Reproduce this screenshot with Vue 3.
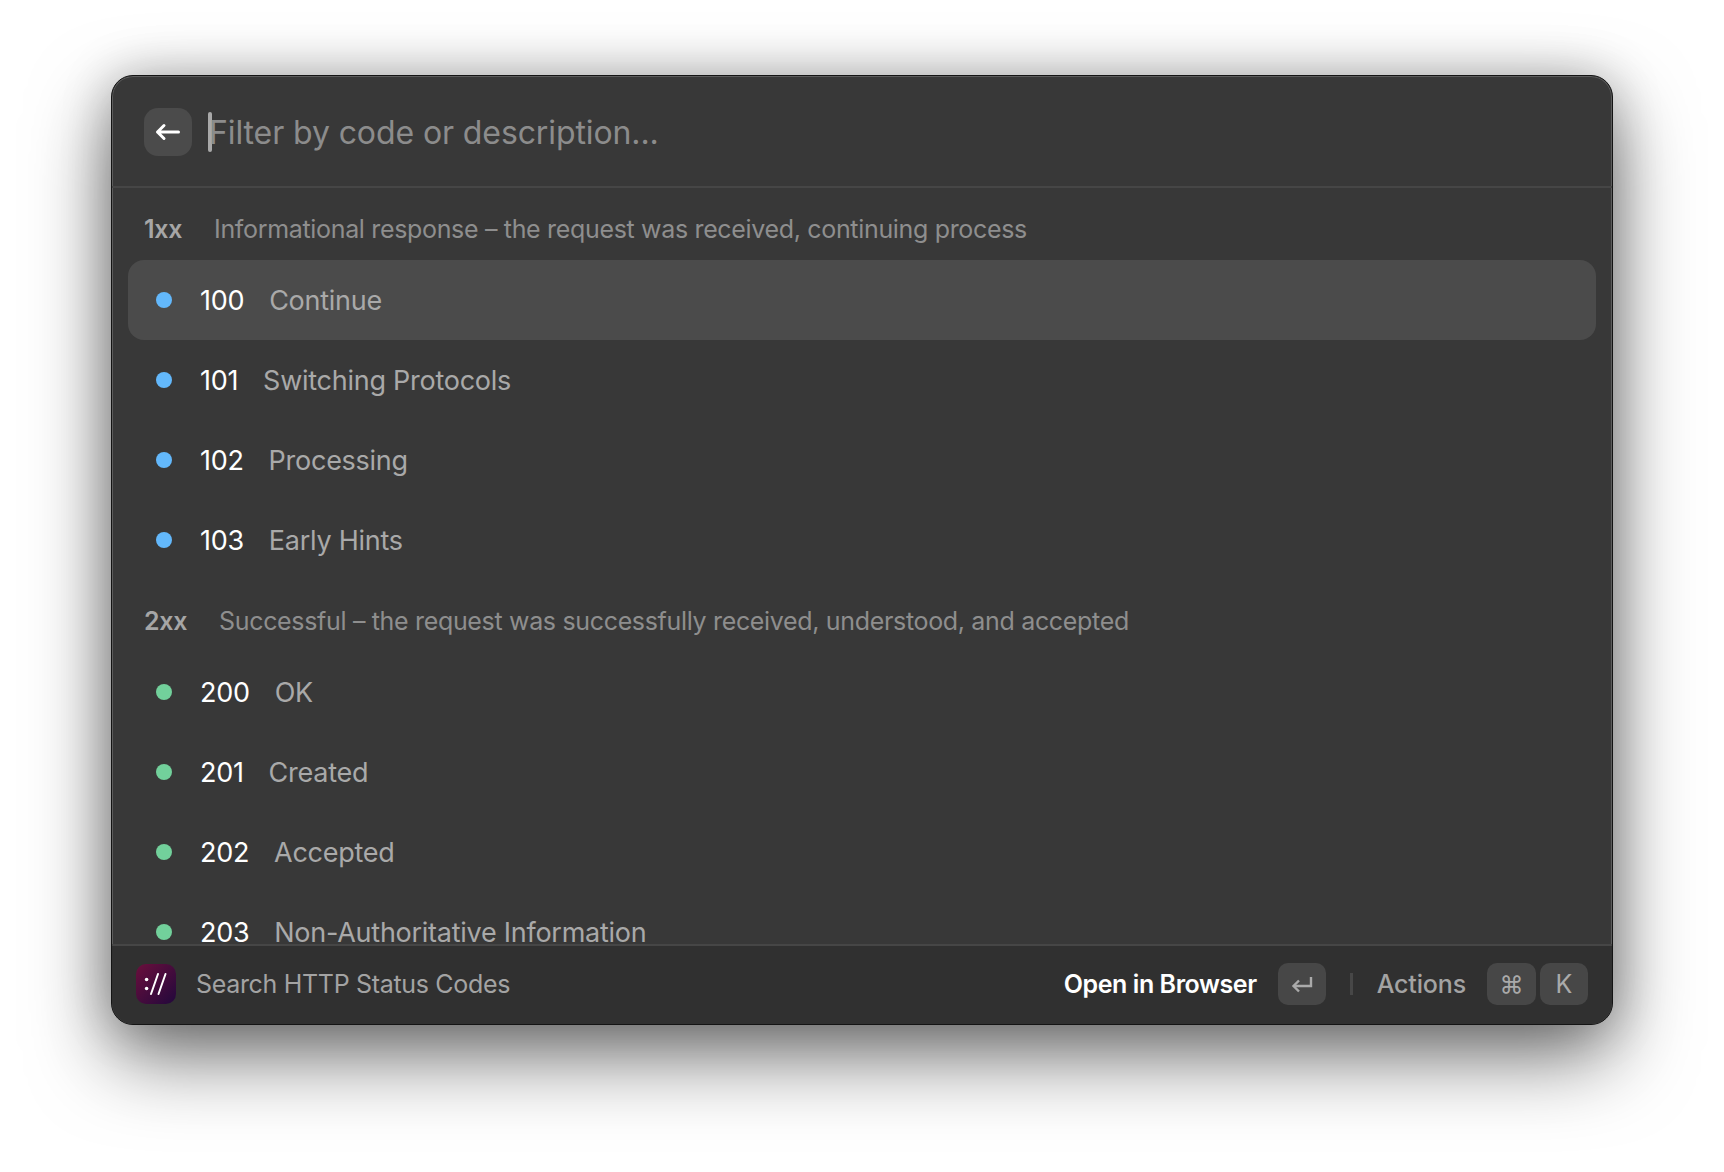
<script setup>
const groups = [
  {
    code: '1xx',
    text: 'Informational response – the request was received, continuing process',
    color: '#63b8fb',
    rows: [
      ['100', 'Continue'],
      ['101', 'Switching Protocols'],
      ['102', 'Processing'],
      ['103', 'Early Hints'],
    ],
  },
  {
    code: '2xx',
    text: 'Successful – the request was successfully received, understood, and accepted',
    color: '#72d09b',
    rows: [
      ['200', 'OK'],
      ['201', 'Created'],
      ['202', 'Accepted'],
      ['203', 'Non-Authoritative Information'],
    ],
  },
]
</script>

<template>
  <div class="page">
    <div class="window">
      <header class="search">
        <button class="back" aria-label="Back">
          <svg width="28" height="24" viewBox="0 0 28 24" fill="none" stroke="#fff" stroke-width="3" stroke-linecap="round" stroke-linejoin="round">
            <path d="M3.5 12H24.5M10 5.5L3.5 12L10 18.5" />
          </svg>
        </button>
        <span class="caret"></span>
        <span class="placeholder">Filter by code or description...</span>
      </header>

      <main class="list">
        <section v-for="g in groups" :key="g.code">
          <div class="section-head">
            <span class="section-code">{{ g.code }}</span>
            <span class="section-text">{{ g.text }}</span>
          </div>
          <div
            v-for="r in g.rows"
            :key="r[0]"
            class="row"
            :class="{ selected: r[0] === '100' }"
          >
            <span class="dot" :style="{ background: g.color }"></span>
            <span class="code">{{ r[0] }}</span>
            <span class="label">{{ r[1] }}</span>
          </div>
        </section>
      </main>

      <footer class="footer">
        <span class="app-icon">
          <svg width="24" height="24" viewBox="0 0 24 24" fill="#fff" stroke="none">
            <circle cx="2.6" cy="7.5" r="1.8" />
            <circle cx="2.6" cy="16.5" r="1.8" />
            <path d="M7 22L14 2" stroke="#fff" stroke-width="2" stroke-linecap="round" />
            <path d="M14.5 22L21.5 2" stroke="#fff" stroke-width="2" stroke-linecap="round" />
          </svg>
        </span>
        <span class="app-name">Search HTTP Status Codes</span>
        <span class="primary">Open in Browser</span>
        <span class="key enter">
          <svg width="22" height="18" viewBox="0 0 22 18" fill="none" stroke="#aaa" stroke-width="2.4">
            <path d="M20 2V11H3" />
            <path d="M8 5.5L2.5 11L8 16.5" />
          </svg>
        </span>
        <span class="sep"></span>
        <span class="actions">Actions</span>
        <span class="key cmd">⌘</span>
        <span class="key k">K</span>
      </footer>
    </div>
  </div>
</template>

<style>
html, body { margin: 0; background: #fff; }
</style>

<style scoped>
.page {
  width: 1724px;
  height: 1172px;
  padding: 75px 0 0 111px;
  box-sizing: border-box;
  overflow: hidden;
  background: #fff;
  font-family: Inter, "Liberation Sans", sans-serif;
}
.window {
  width: 1502px;
  height: 950px;
  box-sizing: border-box;
  border: 1px solid #141414;
  border-radius: 22px;
  background: #383838;
  box-shadow: inset 0 0 0 1px #5c5c5c, 0 32px 80px rgba(0, 0, 0, 0.55), 0 0 50px rgba(0, 0, 0, 0.22);
  display: flex;
  flex-direction: column;
  overflow: hidden;
}
.search {
  height: 112px;
  flex: none;
  box-sizing: border-box;
  border-bottom: 2px solid #464646;
  display: flex;
  align-items: center;
  padding: 2px 0 0 32px;
}
.back {
  width: 48px;
  height: 48px;
  border: 0;
  padding: 0;
  border-radius: 14px;
  background: #4b4b4b;
  display: flex;
  align-items: center;
  justify-content: center;
}
.caret {
  width: 4px;
  height: 40px;
  margin-left: 16px;
  border-radius: 2px;
  background: #a9a9a9;
}
.placeholder {
  font-size: 32px;
  letter-spacing: -0.1px;
  color: #8c8c8c;
  margin-left: -3px;
}
.list {
  flex: 1;
  min-height: 0;
  overflow: hidden;
  padding: 0 16px;
}
.section-head {
  height: 72px;
  box-sizing: border-box;
  padding: 0 0 16px 16px;
  display: flex;
  align-items: flex-end;
  font-size: 25px;
  letter-spacing: -0.33px;
  line-height: 30px;
  color: #8e8e8e;
}
.section-code {
  font-weight: 600;
  color: #a6a6a6;
  margin-right: 32px;
}
.row {
  height: 80px;
  border-radius: 16px;
  display: flex;
  align-items: center;
  padding-left: 28px;
  font-size: 27px;
}
.selected { background: #4b4b4b; }
.dot {
  width: 16px;
  height: 16px;
  border-radius: 50%;
  margin-right: 28px;
}
.code { color: #fff; margin-right: 25px; letter-spacing: -0.3px; }
.label { color: #a9a9a9; letter-spacing: -0.26px; }
.footer {
  height: 80px;
  flex: none;
  box-sizing: border-box;
  border-top: 2px solid #464646;
  background: #303030;
  display: flex;
  align-items: center;
  padding: 0 24px 2px 24px;
  font-size: 25px;
}
.app-icon {
  width: 40px;
  height: 40px;
  border-radius: 10px;
  background: linear-gradient(135deg, #6a0f3c, #22083c);
  display: flex;
  align-items: center;
  justify-content: center;
}
.app-name { color: #a3a3a3; margin-left: 20px; flex: 1; letter-spacing: -0.32px; }
.primary { color: #fff; font-weight: 600; letter-spacing: -0.44px; }
.key {
  height: 42px;
  box-sizing: border-box;
  border-radius: 10px;
  background: #474747;
  color: #aaa;
  display: flex;
  align-items: center;
  justify-content: center;
}
.enter { width: 48px; margin-left: 21px; }
.sep { width: 3px; height: 22px; background: #474747; margin: 0 24px 0 24px; }
.actions { color: #a3a3a3; font-weight: 500; margin-right: 21px; letter-spacing: -0.15px; }
.cmd { width: 49px; font-size: 24px; margin-right: 4px; }
.k { width: 48px; }
</style>
